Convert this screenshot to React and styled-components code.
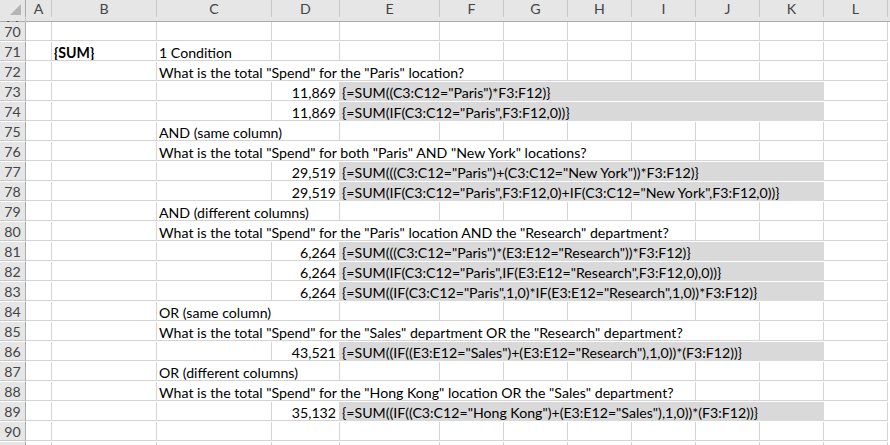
import styled, { createGlobalStyle } from "styled-components";

const GlobalStyle = createGlobalStyle`
  html, body {
    margin: 0;
    padding: 0;
    background: #fff;
  }
  body {
    font-family: Lato, "Open Sans", sans-serif;
    font-size: 14.15px;
    color: #000;
  }
`;

const COLS = "26px 26px 105px 115px 68px 100px 64px 64px 64px 64px 64px 64px 64px";
const LETTERS = ["A", "B", "C", "D", "E", "F", "G", "H", "I", "J", "K", "L", "M"];

const Sheet = styled.div`
  width: 890px;
  height: 445px;
  overflow: hidden;
  display: flex;
  flex-direction: column;
`;

const HeaderRow = styled.div`
  display: grid;
  grid-template-columns: ${COLS};
  height: 22px;
  flex-shrink: 0;
  background: #e6e6e6;
  border-bottom: 1px solid #ababab;
  box-sizing: border-box;
`;

const Corner = styled.div`
  display: flex;
  align-items: flex-end;
  justify-content: flex-end;
  padding: 0 4px 2px 0;
  border-right: 1px solid #ababab;
`;

const ColHead = styled.div`
  display: flex;
  align-items: center;
  justify-content: center;
  border-right: 1px solid #c8c8c8;
  color: #444;
`;

const Row = styled.div`
  display: grid;
  grid-template-columns: ${COLS};
  height: 20px;
  flex-shrink: 0;
`;

const RowHead = styled.div`
  background: #e6e6e6;
  border-right: 1px solid #ababab;
  border-bottom: 1px solid #c8c8c8;
  color: #444;
  display: flex;
  align-items: center;
  justify-content: center;
  box-sizing: border-box;
  padding-top: 1px;
`;

const Cell = styled.div`
  grid-column: span ${(p) => p.$span || 1};
  box-sizing: border-box;
  border-right: 1px solid ${(p) => (p.$fill ? "#d9d9d9" : "#d4d4d4")};
  border-bottom: 1px solid ${(p) => (p.$fill ? "#d9d9d9" : "#d4d4d4")};
  background: ${(p) => (p.$fill ? "#d9d9d9" : "#fff")};
  font-weight: ${(p) => (p.$bold ? 700 : 400)};
  text-align: ${(p) => p.$align || "left"};
  padding: 2px 3px 0 2px;
  white-space: nowrap;
  overflow: hidden;
  line-height: 17px;
`;

const q = '"';
const Q = (s) => s.replace(/'/g, q);

const ROWS = [
  { n: 70, cells: [] },
  { n: 71, cells: [{ c: 1, t: "{SUM}", bold: true }, { c: 2, t: "1 Condition" }] },
  { n: 72, cells: [{ c: 2, span: 4, t: Q("What is the total 'Spend' for the 'Paris' location?") }] },
  { n: 73, num: "11,869", f: Q("{=SUM((C3:C12='Paris')*F3:F12)}") },
  { n: 74, num: "11,869", f: Q("{=SUM(IF(C3:C12='Paris',F3:F12,0))}") },
  { n: 75, cells: [{ c: 2, span: 2, t: "AND (same column)" }] },
  { n: 76, cells: [{ c: 2, span: 6, t: Q("What is the total 'Spend' for both 'Paris' AND 'New York' locations?") }] },
  { n: 77, num: "29,519", f: Q("{=SUM(((C3:C12='Paris')+(C3:C12='New York'))*F3:F12)}") },
  { n: 78, num: "29,519", f: Q("{=SUM(IF(C3:C12='Paris',F3:F12,0)+IF(C3:C12='New York',F3:F12,0))}") },
  { n: 79, cells: [{ c: 2, span: 2, t: "AND (different columns)" }] },
  { n: 80, cells: [{ c: 2, span: 7, t: Q("What is the total 'Spend' for the 'Paris' location AND the 'Research' department?") }] },
  { n: 81, num: "6,264", f: Q("{=SUM(((C3:C12='Paris')*(E3:E12='Research'))*F3:F12)}") },
  { n: 82, num: "6,264", f: Q("{=SUM(IF(C3:C12='Paris',IF(E3:E12='Research',F3:F12,0),0))}") },
  { n: 83, num: "6,264", f: Q("{=SUM((IF(C3:C12='Paris',1,0)*IF(E3:E12='Research',1,0))*F3:F12)}") },
  { n: 84, cells: [{ c: 2, span: 2, t: "OR (same column)" }] },
  { n: 85, cells: [{ c: 2, span: 8, t: Q("What is the total 'Spend' for the 'Sales' department OR the 'Research' department?") }] },
  { n: 86, num: "43,521", f: Q("{=SUM((IF((E3:E12='Sales')+(E3:E12='Research'),1,0))*(F3:F12))}") },
  { n: 87, cells: [{ c: 2, span: 2, t: "OR (different columns)" }] },
  { n: 88, cells: [{ c: 2, span: 7, t: Q("What is the total 'Spend' for the 'Hong Kong' location OR the 'Sales' department?") }] },
  { n: 89, num: "35,132", f: Q("{=SUM((IF((C3:C12='Hong Kong')+(E3:E12='Sales'),1,0))*(F3:F12))}") },
  { n: 90, cells: [] },
  { n: 91, cells: [] },
];

function cellsFor(row) {
  if (row.num) {
    return [
      { c: 3, t: row.num, align: "right" },
      { c: 4, span: 7, t: row.f, fill: true },
    ];
  }
  return row.cells;
}

function SheetRow({ row }) {
  const defs = cellsFor(row);
  const out = [];
  let c = 0;
  while (c < LETTERS.length) {
    const d = defs.find((x) => x.c === c);
    if (d) {
      out.push(
        <Cell key={c} $span={d.span} $align={d.align} $fill={d.fill} $bold={d.bold}>
          {d.t}
        </Cell>
      );
      c += d.span || 1;
    } else {
      out.push(<Cell key={c} />);
      c += 1;
    }
  }
  return (
    <Row>
      <RowHead>{row.n}</RowHead>
      {out}
    </Row>
  );
}

export default function App() {
  return (
    <>
      <GlobalStyle />
      <Sheet>
        <HeaderRow>
          <Corner>
            <svg width="11" height="11" viewBox="0 0 11 11">
              <polygon points="11,0 11,11 0,11" fill="#b4b4b4" />
            </svg>
          </Corner>
          {LETTERS.map((l) => (
            <ColHead key={l}>{l}</ColHead>
          ))}
        </HeaderRow>
        {ROWS.map((r) => (
          <SheetRow key={r.n} row={r} />
        ))}
      </Sheet>
    </>
  );
}
